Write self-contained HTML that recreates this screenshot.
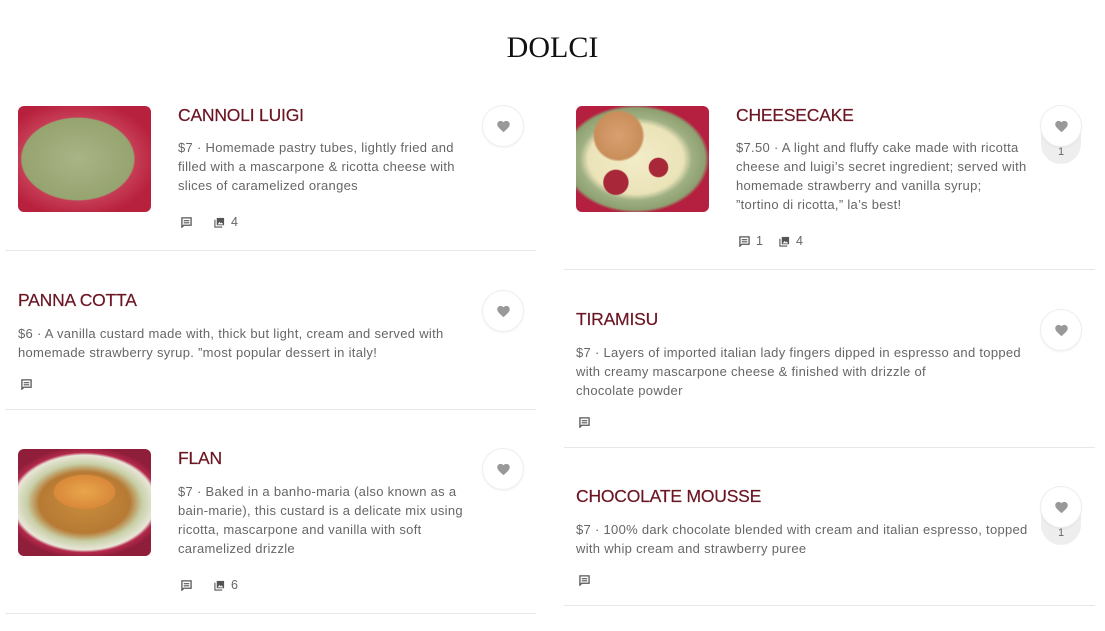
<!DOCTYPE html>
<html><head><meta charset="utf-8"><style>
*{margin:0;padding:0;box-sizing:border-box}
body{width:1105px;height:631px;background:#fff;position:relative;overflow:hidden;font-family:"Liberation Sans",sans-serif}
.h{position:absolute;top:31px;left:0;width:1105px;text-align:center;font-family:"Liberation Serif",serif;font-size:30px;color:#111}
.t{position:absolute;font-size:17.5px;color:#6b1522;letter-spacing:-0.2px;-webkit-text-stroke:0.2px #6b1522}
.d{position:absolute;font-size:13px;line-height:19px;color:#666;white-space:nowrap;letter-spacing:0.3px}
.i{position:absolute;font-size:12.5px;color:#666;display:flex;align-items:center}
.i svg{margin-right:6px}
.hr{position:absolute;height:1px;background:#e8e8e8}
.hb{position:absolute;width:42px;height:42px;border-radius:50%;background:#fff;border:1px solid #eee;box-shadow:0 1px 2px rgba(0,0,0,.05);display:flex;align-items:center;justify-content:center}
.pill{position:absolute;width:40px;height:38px;border-radius:0 0 20px 20px;background:#eee;font-size:11px;color:#666;text-align:center;padding-top:20px}
.img{position:absolute;width:133px;border-radius:6px;overflow:hidden}
</style></head><body>
<div class="h">DOLCI</div>

<svg width="0" height="0" style="position:absolute"><defs>
<symbol id="c" viewBox="0 0 12 12"><path d="M1 1h10v8H3l-2 2z" fill="none" stroke="#555" stroke-width="1.4"/><path d="M3 4h6M3 6.3h6" stroke="#555" stroke-width="1.2"/></symbol>
<symbol id="p" viewBox="0 0 12 12"><path d="M3 1h8v8H3z" fill="#555"/><path d="M1 3v8h8" fill="none" stroke="#555" stroke-width="1.2"/><path d="M4 8l2-2.5 1.5 1.5 1-1L10 8z" fill="#fff"/></symbol>
<symbol id="h" viewBox="0 0 24 24"><path d="M12 21l-1.5-1.3C5.4 15.1 2 12.1 2 8.4 2 5.4 4.4 3 7.4 3c1.7 0 3.4.8 4.6 2.1C13.2 3.8 14.9 3 16.6 3 19.6 3 22 5.4 22 8.4c0 3.7-3.4 6.7-8.5 11.3z" fill="#999"/></symbol>
</defs></svg>

<div class="img" style="left:18px;top:106px;height:106px;background:radial-gradient(ellipse 60% 55% at 45% 50%,#a9b486 0,#96a470 70%,#c63c55 72%,#b8213e 100%)"></div>
<div class="t" style="left:178px;top:105px">CANNOLI LUIGI</div>
<div class="d" style="left:178px;top:138px">$7 · Homemade pastry tubes, lightly fried and<br>filled with a mascarpone &amp; ricotta cheese with<br>slices of caramelized oranges</div>
<div class="i" style="left:181px;top:215px"><svg width="11" height="11"><use href="#c"/></svg><span style="width:16px"></span><svg width="11" height="11"><use href="#p"/></svg>4</div>
<div class="hb" style="left:482px;top:105px"><svg width="15" height="15"><use href="#h"/></svg></div>
<div class="hr" style="left:5px;width:531px;top:250px"></div>

<div class="t" style="left:18px;top:290px">PANNA COTTA</div>
<div class="d" style="left:18px;top:324px">$6 · A vanilla custard made with, thick but light, cream and served with<br>homemade strawberry syrup. ”most popular dessert in italy!</div>
<div class="i" style="left:21px;top:379px"><svg width="11" height="11"><use href="#c"/></svg></div>
<div class="hb" style="left:482px;top:290px"><svg width="15" height="15"><use href="#h"/></svg></div>
<div class="hr" style="left:5px;width:531px;top:409px"></div>

<div class="img" style="left:18px;top:449px;height:107px;background:radial-gradient(ellipse 38% 26% at 50% 40%,#e9a64a 0,#d9893a 60%,transparent 62%),radial-gradient(ellipse 62% 52% at 50% 50%,#c98d3c 0,#b77a34 55%,#c8d0a8 70%,#e8e6d8 85%,#b3284a 90%,#8f1e3a 100%)"></div>
<div class="t" style="left:178px;top:448px">FLAN</div>
<div class="d" style="left:178px;top:482px">$7 · Baked in a banho-maria (also known as a<br>bain-marie), this custard is a delicate mix using<br>ricotta, mascarpone and vanilla with soft<br>caramelized drizzle</div>
<div class="i" style="left:181px;top:578px"><svg width="11" height="11"><use href="#c"/></svg><span style="width:16px"></span><svg width="11" height="11"><use href="#p"/></svg>6</div>
<div class="hb" style="left:482px;top:448px"><svg width="15" height="15"><use href="#h"/></svg></div>
<div class="hr" style="left:5px;width:531px;top:613px"></div>

<div class="img" style="left:576px;top:106px;height:106px;background:radial-gradient(circle at 32% 28%,#d9a070 0,#c98e5a 20%,transparent 22%),radial-gradient(circle at 30% 72%,#a8283a 0,#a8283a 10%,transparent 11%),radial-gradient(circle at 62% 58%,#a8283a 0,#a8283a 9%,transparent 10%),radial-gradient(ellipse 65% 60% at 45% 50%,#f2ecc8 0,#ebe3b8 55%,#9fb084 65%,#8ea070 80%,#b52040 85%)"></div>
<div class="t" style="left:736px;top:105px">CHEESECAKE</div>
<div class="d" style="left:736px;top:138px">$7.50 · A light and fluffy cake made with ricotta<br>cheese and luigi’s secret ingredient; served with<br>homemade strawberry and vanilla syrup;<br>”tortino di ricotta,” la’s best!</div>
<div class="i" style="left:739px;top:234px"><svg width="11" height="11"><use href="#c"/></svg>1<span style="width:16px"></span><svg width="11" height="11"><use href="#p"/></svg>4</div>
<div class="pill" style="left:1041px;top:126px">1</div>
<div class="hb" style="left:1040px;top:105px"><svg width="15" height="15"><use href="#h"/></svg></div>
<div class="hr" style="left:564px;width:531px;top:269px"></div>

<div class="t" style="left:576px;top:309px">TIRAMISU</div>
<div class="d" style="left:576px;top:343px">$7 · Layers of imported italian lady fingers dipped in espresso and topped<br>with creamy mascarpone cheese &amp; finished with drizzle of<br>chocolate powder</div>
<div class="i" style="left:579px;top:417px"><svg width="11" height="11"><use href="#c"/></svg></div>
<div class="hb" style="left:1040px;top:309px"><svg width="15" height="15"><use href="#h"/></svg></div>
<div class="hr" style="left:564px;width:531px;top:447px"></div>

<div class="t" style="left:576px;top:486px">CHOCOLATE MOUSSE</div>
<div class="d" style="left:576px;top:520px">$7 · 100% dark chocolate blended with cream and italian espresso, topped<br>with whip cream and strawberry puree</div>
<div class="i" style="left:579px;top:575px"><svg width="11" height="11"><use href="#c"/></svg></div>
<div class="pill" style="left:1041px;top:507px">1</div>
<div class="hb" style="left:1040px;top:486px"><svg width="15" height="15"><use href="#h"/></svg></div>
<div class="hr" style="left:564px;width:531px;top:605px"></div>
</body></html>
